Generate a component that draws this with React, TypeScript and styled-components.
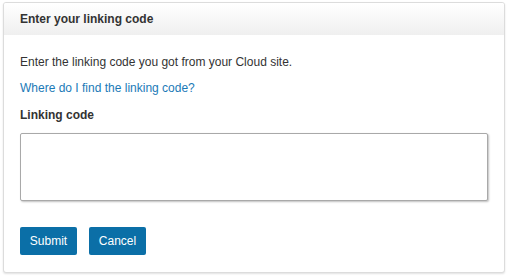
import React from 'react'
import styled, { createGlobalStyle } from 'styled-components'

const GlobalStyle = createGlobalStyle`
  html, body {
    margin: 0;
    padding: 0;
    background: #fff;
  }
  body {
    font-family: Arial, "Liberation Sans", sans-serif;
    font-size: 12px;
    color: #333;
  }
`

const Page = styled.div`
  padding: 2px 3px 3px 3px;
`

const Panel = styled.section`
  border: 1px solid #dcdcdc;
  border-radius: 3px;
  box-shadow: 0 1px 2px rgba(0, 0, 0, 0.12);
  overflow: hidden;
  background: #fff;
`

const Header = styled.header`
  height: 32px;
  display: flex;
  align-items: center;
  padding: 0 16px;
  background: linear-gradient(to bottom, #ffffff, #efefef);
  font-weight: bold;
  font-size: 12px;
  color: #333;
`

const Body = styled.div`
  padding: 20px 16px 17px 16px;
  display: flex;
  flex-direction: column;
`

const Text = styled.p`
  margin: 0 0 12px 0;
  line-height: 14px;
`

const HelpLink = styled.a`
  color: #1b7ab7;
  text-decoration: none;
  line-height: 14px;
  margin-bottom: 13px;
`

const Label = styled.label`
  font-weight: bold;
  line-height: 14px;
  margin-bottom: 11px;
`

const CodeInput = styled.textarea`
  box-sizing: border-box;
  width: 468px;
  height: 68px;
  border: 1px solid #a9a9a9;
  border-radius: 2px;
  box-shadow: 1px 1px 2px rgba(0, 0, 0, 0.25);
  resize: none;
  margin: 0 0 26px 0;
  font-family: inherit;
  font-size: 12px;
`

const Actions = styled.div`
  display: flex;
  gap: 12px;
`

const Button = styled.button`
  height: 28px;
  padding: 0 9px;
  min-width: 57px;
  border: none;
  border-radius: 2px;
  background: #0b6fa7;
  color: #fff;
  font-family: inherit;
  font-size: 12px;
`

export default function App() {
  return (
    <>
      <GlobalStyle />
      <Page>
        <Panel>
          <Header>Enter your linking code</Header>
          <Body>
            <Text>Enter the linking code you got from your Cloud site.</Text>
            <HelpLink href="#">Where do I find the linking code?</HelpLink>
            <Label htmlFor="linking-code">Linking code</Label>
            <CodeInput id="linking-code" />
            <Actions>
              <Button>Submit</Button>
              <Button>Cancel</Button>
            </Actions>
          </Body>
        </Panel>
      </Page>
    </>
  )
}
